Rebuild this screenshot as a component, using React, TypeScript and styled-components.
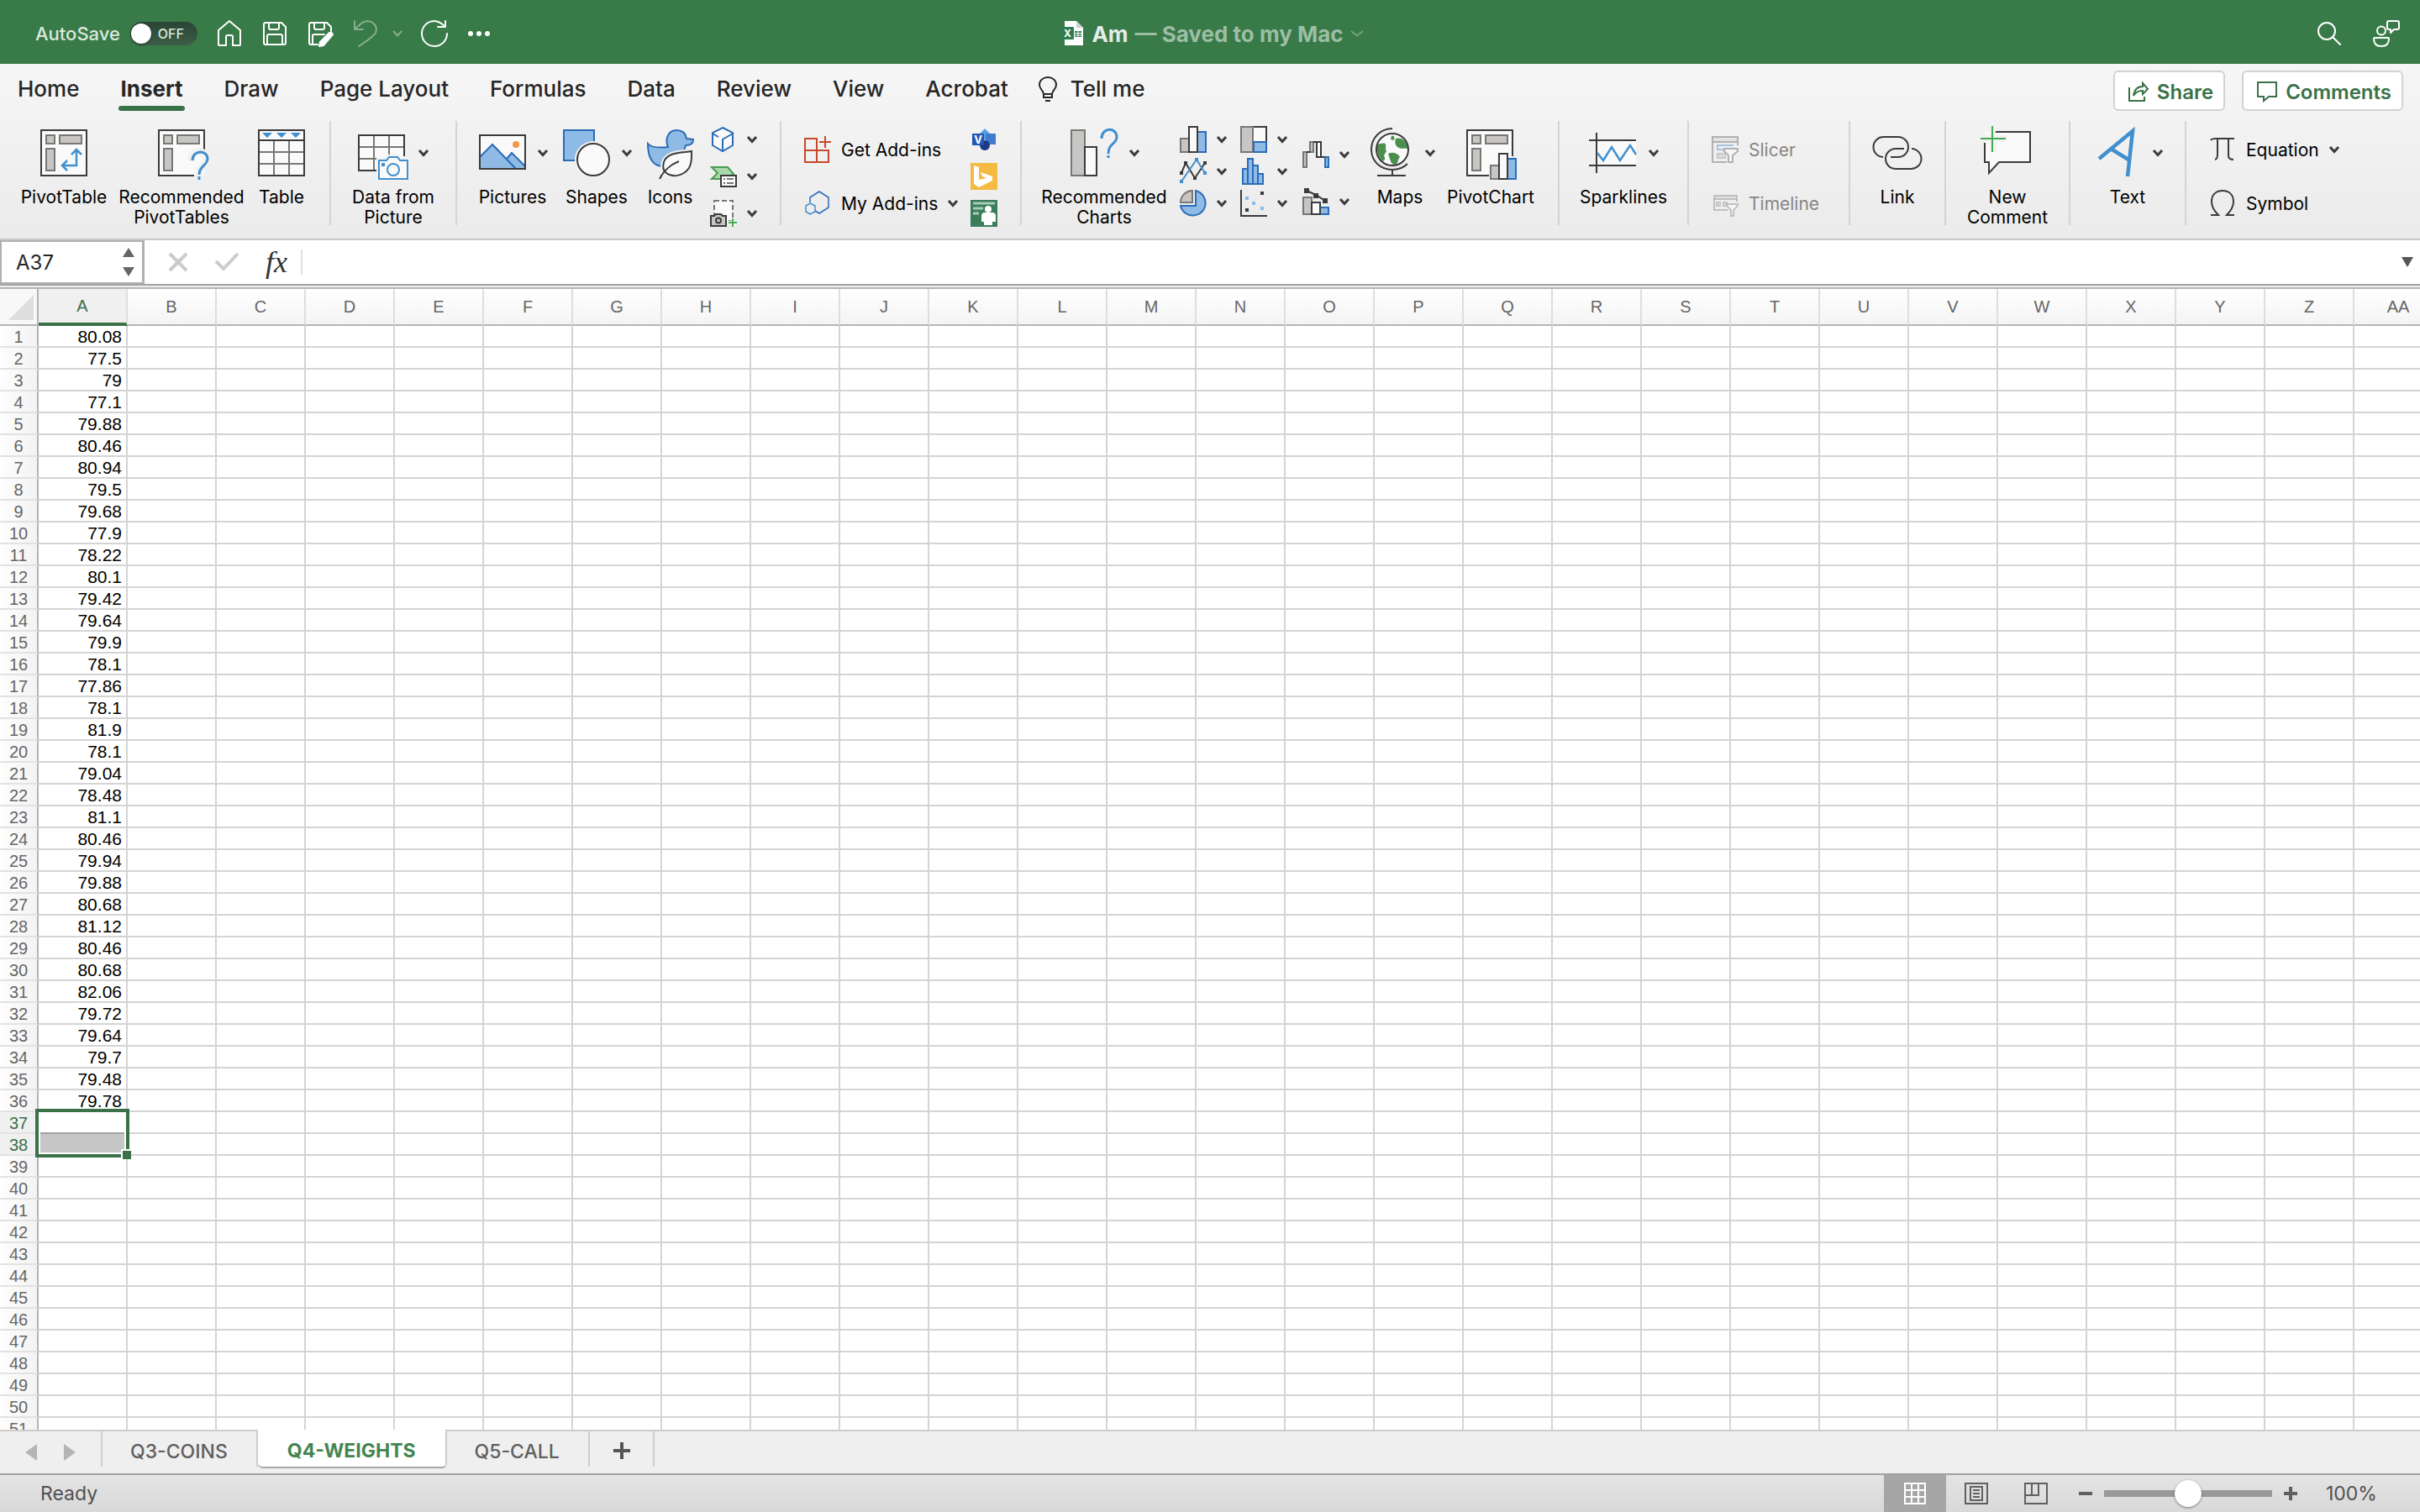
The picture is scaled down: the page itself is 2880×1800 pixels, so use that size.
import React from "react";
import styled, { createGlobalStyle, css } from "styled-components";

const GREEN = "#387a48";
const INK = "#3b3b3b";
const PAPER = "#fafafa";
const GREY = "#777774";
const GREY_FILL = "#c8c6c4";
const BLUE = "#2b6cb8";
const SKY = "#418fce";
const BLUE_FILL = "#8fbae6";

const GlobalStyle = createGlobalStyle`
  * { box-sizing: border-box; }
  body { margin: 0; }
  body, button, input {
    font-family: Inter, "Liberation Sans", sans-serif;
    color: #000;
  }
  button {
    margin: 0;
    padding: 0;
    border: 0;
    background: none;
    white-space: nowrap;
  }
  input { margin: 0; }
  svg { display: block; flex: none; overflow: visible; }
`;

const Window = styled.div`
  display: flex;
  flex-direction: column;
  height: 100vh;
  overflow: hidden;
  background: #fff;
`;

/* ---------- title bar ---------- */

const TitleBar = styled.header`
  flex: none;
  display: grid;
  grid-template-columns: 1fr auto 1fr;
  align-items: center;
  height: 76px;
  padding: 4px 24px 0 30px;
  background: ${GREEN};
  color: #fff;
`;

const QuickAccess = styled.div`
  display: flex;
  align-items: center;
  gap: 22px;
  padding-left: 12px;
`;

const AutoSave = styled.label`
  display: flex;
  align-items: center;
  gap: 12px;
  color: #dbe8de;
  font-size: 22px;
  font-weight: 500;
`;

const Switch = styled.span`
  position: relative;
  display: flex;
  align-items: center;
  justify-content: flex-end;
  width: 80px;
  height: 28px;
  padding-right: 16px;
  border-radius: 14px;
  background: linear-gradient(#2a4433, #3d5e48);
  color: #dbe8de;
  font-size: 16px;
  font-weight: 500;
`;

const SwitchInput = styled.input`
  position: absolute;
  left: 1px;
  top: 2px;
  width: 24px;
  height: 24px;
  appearance: none;
  border-radius: 50%;
  background: #fff;
  box-shadow: 0 1px 3px rgba(0, 0, 0, 0.5);
`;

const TitleButton = styled.button<{ $dim?: boolean }>`
  display: flex;
  align-items: center;
  gap: 16px;
  color: #fff;
  opacity: ${(p) => (p.$dim ? 0.4 : 1)};
`;

const DocTitle = styled.h1`
  display: flex;
  align-items: center;
  gap: 8px;
  margin: 0;
  font-size: 26px;
  font-weight: 700;
  color: #e3ece5;
`;

const SavedState = styled.span`
  color: #9cbea4;
`;

const TitleRight = styled.div`
  display: flex;
  justify-content: flex-end;
  gap: 36px;
`;

/* ---------- ribbon ---------- */

const RibbonArea = styled.section`
  flex: none;
  background: linear-gradient(#f6f6f6, #ebebeb);
  border-bottom: 2px solid #c9c9c9;
`;

const TabRow = styled.nav`
  display: flex;
  align-items: center;
  gap: 36px;
  height: 64px;
  padding: 0 20px 0 21px;
`;

const TabList = styled.div`
  display: flex;
  gap: 49px;
`;

const RibbonTab = styled.button<{ $active?: boolean }>`
  position: relative;
  display: flex;
  align-items: center;
  gap: 16px;
  height: 60px;
  padding-bottom: 5px;
  color: #262626;
  font-size: 26px;
  font-weight: ${(p) => (p.$active ? 700 : 500)};
  ${(p) =>
    p.$active &&
    css`
      &::after {
        content: "";
        position: absolute;
        left: -2px;
        right: -2px;
        bottom: 6px;
        height: 6px;
        border-radius: 3px;
        background: #3a7148;
      }
    `}
`;

const Actions = styled.div`
  display: flex;
  gap: 20px;
  margin-left: auto;
`;

const ActionButton = styled.button`
  display: flex;
  align-items: center;
  gap: 10px;
  height: 48px;
  padding: 2px 12px 0 16px;
  border: 2px solid #d2d2d2;
  border-radius: 6px;
  background: #fff;
  color: #3a7148;
  font-size: 24px;
  font-weight: 600;
`;

const Ribbon = styled.div`
  display: flex;
  height: 144px;
  padding: 4px 0 16px;
`;

const Group = styled.div<{ $left: number; $right: number; $last?: boolean }>`
  display: flex;
  flex: none;
  align-items: flex-start;
  height: 124px;
  padding: 6px ${(p) => p.$right}px 0 ${(p) => p.$left}px;
  border-right: ${(p) => (p.$last ? 0 : 2)}px solid #d4d4d4;
`;

const Tool = styled.button<{ $w: number }>`
  display: flex;
  flex-direction: column;
  align-items: center;
  gap: 9px;
  width: ${(p) => p.$w}px;
`;

const ToolFace = styled.span`
  display: flex;
  align-items: center;
  gap: 12px;
`;

const ToolLabel = styled.span`
  font-size: 21px;
  line-height: 24px;
  text-align: center;
  white-space: pre;
`;

const Stack = styled.div<{ $gap: number; $top?: number; $indent?: number }>`
  display: flex;
  flex-direction: column;
  gap: ${(p) => p.$gap}px;
  padding-top: ${(p) => p.$top ?? 0}px;
  margin-left: ${(p) => p.$indent ?? 0}px;
`;

const MiniTool = styled.button`
  display: flex;
  align-items: center;
  gap: 12px;
  height: 32px;
`;

const LineTools = styled.div<{ $w?: number }>`
  display: flex;
  flex-direction: column;
  gap: 16px;
  width: ${(p) => (p.$w ? `${p.$w}px` : "auto")};
  padding-top: 4px;
`;

const LineTool = styled.button`
  display: flex;
  align-items: center;
  gap: 12px;
  height: 48px;
  font-size: 21px;
  &:disabled { color: #858585; }
`;

/* ---------- formula bar ---------- */

const FormulaBar = styled.div`
  flex: none;
  display: flex;
  align-items: center;
  height: 52px;
  background: #fff;
`;

const NameBox = styled.div`
  display: flex;
  align-items: center;
  justify-content: space-between;
  align-self: stretch;
  width: 172px;
  padding: 0 9px 0 17px;
  border: 2px solid #b0b0b0;
  border-right-width: 3px;
`;

const NameInput = styled.input`
  width: 100px;
  padding: 0;
  border: 0;
  outline: 0;
  background: none;
  color: #262626;
  font-size: 24px;
`;

const FormulaActions = styled.div`
  display: flex;
  align-items: center;
  gap: 32px;
  padding: 0 16px 0 28px;
`;

const FxButton = styled.button`
  color: #333;
  font: italic 400 36px/40px "Liberation Serif", serif;
`;

const FormulaInput = styled.input`
  flex: 1;
  height: 30px;
  padding: 0 14px;
  border: 0;
  border-left: 2px solid #e0e0e0;
  outline: 0;
  font-size: 24px;
`;

const ExpandButton = styled.button`
  padding: 0 8px;
`;

const Divider = styled.div`
  flex: none;
  height: 6px;
  border-top: 2px solid #a3a3a3;
  border-bottom: 2px solid #b4b4b4;
  background: #ededed;
`;

/* ---------- grid ---------- */

const SheetArea = styled.main`
  flex: 1;
  min-height: 0;
  overflow: hidden;
  border-bottom: 2px solid #cdcdcd;
`;

const Sheet = styled.table`
  border-collapse: separate;
  border-spacing: 0;
  font-family: "Liberation Sans", Arial, sans-serif;
  font-size: 20px;
  line-height: 22px;
`;

const Corner = styled.td`
  min-width: 46px;
  width: 46px;
  height: 44px;
  padding: 6px 4px 4px 10px;
  border-right: 2px solid #b4b4b4;
  border-bottom: 2px solid #b4b4b4;
  background: #f8f8f8;
`;

const ColHead = styled.th<{ $on?: boolean }>`
  min-width: 106px;
  height: 44px;
  padding: 0;
  border-right: 2px solid #dedede;
  border-bottom: ${(p) => (p.$on ? "4px solid #3a7148" : "2px solid #b4b4b4")};
  background: ${(p) => (p.$on ? "#f0f0f0" : "linear-gradient(#ffffff, #f4f4f4)")};
  color: ${(p) => (p.$on ? "#3a7148" : "#666")};
  font-weight: 400;
`;

const RowHead = styled.th<{ $on?: boolean }>`
  height: 26px;
  padding: 2px 0 0;
  border-right: 2px solid #b4b4b4;
  border-bottom: 2px solid #e2e2e2;
  background: ${(p) => (p.$on ? "#f0f0f0" : "linear-gradient(90deg, #fefefe, #f3f3f3)")};
  color: ${(p) => (p.$on ? "#3a7148" : "#666")};
  font-weight: 400;
`;

const Cell = styled.td`
  position: relative;
  height: 26px;
  padding: 2px 5px 0;
  border-right: 2px solid #d4d4d4;
  border-bottom: 2px solid #d4d4d4;
  font-size: 21px;
  text-align: right;
`;

const Selection = styled.div`
  position: absolute;
  z-index: 1;
  left: -4px;
  top: -4px;
  width: 112px;
  height: 58px;
  border: 4px solid #3a7148;
  background: #fff;
`;

const SelectionFill = styled.div`
  position: absolute;
  inset: 24px 2px 2px;
  border-top: 2px solid #a2a2a2;
  background: #c6c6c6;
`;

const FillHandle = styled.div`
  position: absolute;
  right: -6px;
  bottom: -6px;
  width: 12px;
  height: 12px;
  border-left: 2px solid #fff;
  border-top: 2px solid #fff;
  background: #3a7148;
`;

/* ---------- sheet tabs and status bar ---------- */

const SheetTabs = styled.nav`
  flex: none;
  display: flex;
  align-items: flex-start;
  height: 50px;
  background: #efefef;
`;

const SheetNav = styled.div`
  display: flex;
  align-items: center;
  gap: 32px;
  width: 122px;
  height: 42px;
  padding: 8px 0 0 30px;
  border-right: 2px solid #cdcdcd;
`;

const SheetTab = styled.button<{ $active?: boolean }>`
  height: 42px;
  padding: 5px 34px 0 33px;
  border-right: 2px solid #cdcdcd;
  color: #5f5f5f;
  font-size: 23px;
  font-weight: 500;
  ${(p) =>
    p.$active &&
    css`
      height: 46px;
      margin-top: -2px;
      padding: 5px 35px 0;
      border-bottom: 2px solid #a8a8a8;
      border-radius: 0 0 6px 6px;
      background: #fff;
      color: #44854f;
      font-weight: 700;
    `}
`;

const AddSheet = styled.button`
  display: flex;
  align-items: center;
  height: 42px;
  padding: 4px 27px 0 28px;
  border-right: 2px solid #cdcdcd;
`;

const StatusBar = styled.footer`
  flex: none;
  display: flex;
  align-items: center;
  height: 46px;
  padding: 0 50px 0 48px;
  border-top: 2px solid #a0a0a0;
  background: linear-gradient(#e4e4e4, #d8d8d8);
  color: #505050;
  font-size: 23px;
`;

const ViewButtons = styled.div`
  display: flex;
  align-self: stretch;
  margin-left: auto;
`;

const ViewButton = styled.button<{ $active?: boolean }>`
  display: flex;
  align-items: center;
  justify-content: center;
  width: ${(p) => (p.$active ? 74 : 71)}px;
  background: ${(p) => (p.$active ? "#a6a6a6" : "none")};
`;

const Zoom = styled.div`
  display: flex;
  align-items: center;
  gap: 14px;
  padding-left: 16px;
`;

const ZoomSlider = styled.input`
  width: 200px;
  height: 32px;
  appearance: none;
  background: linear-gradient(#999, #999) no-repeat center / 100% 8px;
  border-radius: 4px;
  &::-webkit-slider-thumb {
    appearance: none;
    width: 32px;
    height: 32px;
    border-radius: 50%;
    background: #fff;
    box-shadow: 0 1px 3px rgba(0, 0, 0, 0.45);
  }
`;

const ZoomValue = styled.output`
  width: 62px;
  margin-left: 20px;
`;

/* ---------- small drawings ---------- */

const Chevron = ({ color = INK, w = 12, stroke = 3 }: { color?: string; w?: number; stroke?: number }) => (
  <svg width={w} height="8" viewBox={`0 0 ${w} 8`} fill="none" stroke={color} strokeWidth={stroke}>
    <path d={`M1 1L${w / 2} 6.5L${w - 1} 1`} />
  </svg>
);

const Triangle = ({ d, w, h, color }: { d: string; w: number; h: number; color: string }) => (
  <svg width={w} height={h} fill={color}>
    <path d={d} />
  </svg>
);

const Big = ({ children }: { children: React.ReactNode }) => (
  <svg width="60" height="64" viewBox="0 0 60 64" fill="none" strokeWidth="2">
    {children}
  </svg>
);

const Small = ({ children }: { children: React.ReactNode }) => (
  <svg width="32" height="32" viewBox="0 0 32 32" fill="none" strokeWidth="2">
    {children}
  </svg>
);

const Line32 = ({ children }: { children: React.ReactNode }) => (
  <svg width="32" height="32" viewBox="0 0 32 32" fill="none" stroke="#fff" strokeWidth="2" strokeLinejoin="round" strokeLinecap="round">
    {children}
  </svg>
);

const PivotBase = () => (
  <g fill={GREY_FILL} stroke={GREY}>
    <rect x="9" y="11" width="10" height="10" />
    <rect x="25" y="11" width="26" height="10" />
    <rect x="9" y="27" width="10" height="26" />
  </g>
);

const icons = {
  pivot: (
    <Big>
      <rect x="3" y="5" width="54" height="54" fill={PAPER} stroke={INK} />
      <PivotBase />
      <path d="M45 28V47H28M39 34L45 28L51 34M34 41L28 47L34 53" stroke={SKY} strokeWidth="2.5" />
    </Big>
  ),
  recPivot: (
    <Big>
      <path d="M3 5H57V59H3Z" fill={PAPER} />
      <path d="M57 28V5H3V59H45" stroke={INK} />
      <PivotBase />
      <path d="M42 42V38C42 28 60 28 60 39C60 48 51 47 51 58" stroke="#f2f2f2" strokeWidth="9" />
      <path d="M43 41C43 28 61 28 61 39C61 47 51 47 51 58M51 60V64" stroke={SKY} strokeWidth="3" />
    </Big>
  ),
  table: (
    <Big>
      <rect x="3" y="5" width="54" height="54" fill={PAPER} />
      <path d="M21 17V59M39 17V59M3 31H57M3 45H57" stroke={GREY} />
      <path d="M3 5H57V59H3ZM3 17H57" stroke={INK} />
      <path d="M7 8H19L13 14ZM24 8H36L30 14ZM41 8H53L47 14Z" fill={SKY} />
    </Big>
  ),
  dataPicture: (
    <Big>
      <rect x="1" y="11" width="54" height="42" fill={PAPER} />
      <path d="M19 11V53M37 11V34M1 25H55M1 39H24" stroke={GREY} />
      <path d="M55 36V11H1V53H22" stroke={INK} />
      <path d="M25 41H34L37 37H47L50 41H59V63H25Z" fill={PAPER} stroke="#f2f2f2" strokeWidth="6" />
      <path d="M25 41H34L37 37H47L50 41H59V63H25Z" fill={PAPER} stroke={SKY} />
      <circle cx="42" cy="52" r="7" stroke={SKY} />
      <rect x="28" y="44" width="4" height="4" fill={SKY} />
    </Big>
  ),
  pictures: (
    <Big>
      <rect x="3" y="11" width="54" height="40" fill={PAPER} />
      <path d="M3 37L18 22L46 51H3Z" fill={BLUE_FILL} />
      <path d="M35 39L41 32L57 48V51H46Z" fill={BLUE_FILL} />
      <path d="M3 37L18 22L46 51M35 39L41 32L57 48" stroke={BLUE} />
      <circle cx="46" cy="22" r="4" fill="#ee9a48" />
      <rect x="3" y="11" width="54" height="40" stroke={INK} />
    </Big>
  ),
  shapes: (
    <Big>
      <rect x="3" y="5" width="36" height="36" fill={BLUE_FILL} stroke={BLUE} />
      <circle cx="38" cy="40" r="22" fill="#f2f2f2" />
      <circle cx="38" cy="40" r="19" fill={PAPER} stroke={INK} />
    </Big>
  ),
  icons: (
    <Big>
      <path d="M3 21C7 26 18 26 27 25C23 16 27 5 37 5C44 5 48 9 49 15L57 16C57 21 53 23 48 23L46 30L28 36L20 48C8 47 3 36 3 21Z" fill={BLUE_FILL} stroke={BLUE} />
      <path d="M55 30C42 32 26 31 22 43C20 50 22 54 25 56C33 62 46 59 52 50C56 43 55 36 55 30Z" fill={PAPER} stroke="#f2f2f2" strokeWidth="6" />
      <path d="M55 30C42 32 26 31 22 43C20 50 22 54 25 56C33 62 46 59 52 50C56 43 55 36 55 30Z" fill={PAPER} stroke={INK} />
      <path d="M40 42C30 46 21 54 17 63" stroke={INK} />
    </Big>
  ),
  cube: (
    <Small>
      <path d="M15 2L27 8V23L15 30L3 23V8Z" fill={PAPER} stroke={BLUE} />
      <path d="M3 9L10 13M15 30V16L27 9" stroke={BLUE} />
    </Small>
  ),
  smartArt: (
    <Small>
      <path d="M2 5H21L28 13L20 19H2L9 12Z" fill="#a9d8ab" stroke="#4a9a50" />
      <rect x="13" y="15" width="18" height="13" fill={PAPER} stroke={INK} />
      <path d="M16 19H18M16 24H18M20 19H28M20 24H28" stroke={GREY} />
    </Small>
  ),
  screenshot: (
    <Small>
      <rect x="5" y="1" width="22" height="24" fill={PAPER} stroke={GREY} strokeDasharray="6 3" />
      <path d="M1 19H5L7 17H13L15 19H19V31H1Z" fill={GREY_FILL} stroke={INK} />
      <circle cx="10" cy="24.500" r="3" stroke={INK} />
      <path d="M27 21V32M22 27H32" stroke="#fafafa" strokeWidth="4" />
      <path d="M27 22V32M22 27H32" stroke="#45a852" />
    </Small>
  ),
  getAddins: (
    <Small>
      <path d="M1 3H15V31H1ZM1 17H29V31H15M25 0V14M18 7H32" stroke="#c8492a" />
    </Small>
  ),
  myAddins: (
    <Small>
      <path d="M7 15V9L18 2L29 9V21L18 28L13 25" stroke={BLUE} strokeWidth="1.5" />
      <path d="M7 16L13 19V26L7 29L2 26V19Z" stroke={SKY} strokeWidth="1.5" />
    </Small>
  ),
  visio: (
    <Small>
      <path d="M17 3L24 10L17 17L10 10Z" fill="#55a1e6" />
      <rect x="18" y="9" width="12" height="13" fill="#3f7ccc" />
      <circle cx="17" cy="23" r="6" fill="#1b3a82" />
      <rect x="2" y="9" width="14" height="14" fill="#2356b4" />
      <text x="9" y="21" fill="#fff" fontSize="13" fontWeight="700" textAnchor="middle">V</text>
    </Small>
  ),
  bing: (
    <Small>
      <rect width="32" height="32" fill="#f5ba42" />
      <path d="M4 3L10 5V20L19 18L14 16L12 11L26 16V21L10 29L4 25Z" fill="#fff" />
    </Small>
  ),
  people: (
    <Small>
      <rect width="32" height="32" fill="#3a7d59" />
      <path d="M3 4H29M3 10H15M3 16H10" stroke="#a9cbb8" strokeWidth="3" />
      <circle cx="21" cy="11" r="4" fill="#fff" />
      <path d="M13 26V19Q13 15 17 15H26Q30 15 30 19V26H26V30H16V26Z" fill="#fff" />
    </Small>
  ),
  recCharts: (
    <Big>
      <rect x="3" y="5" width="16" height="54" fill={GREY_FILL} stroke={GREY} />
      <rect x="19" y="25" width="14" height="34" fill={PAPER} stroke={INK} />
      <path d="M39 15C39 1 57 1 57 13C57 22 47 20 47 33M47 35V38" stroke={SKY} strokeWidth="3" />
    </Big>
  ),
  column: (
    <Small>
      <rect x="1" y="15" width="10" height="16" fill={GREY_FILL} stroke={GREY} />
      <rect x="21" y="7" width="10" height="24" fill={BLUE_FILL} stroke={BLUE} />
      <rect x="11" y="1" width="10" height="30" fill={PAPER} stroke={INK} />
    </Small>
  ),
  line: (
    <Small>
      <path d="M2 18L7 6L18 24L30 6" stroke={INK} />
      <path d="M2 28L20 2L30 18" stroke={SKY} />
      <path d="M0 16H4V20H0ZM5 4H9V8H5ZM16 22H20V26H16ZM28 4H32V8H28Z" fill={INK} />
      <path d="M0 26H4V30H0ZM18 0H22V4H18ZM28 16H32V20H28Z" fill={SKY} />
    </Small>
  ),
  pie: (
    <Small>
      <path d="M19 1A15 15 0 1 1 1 19H19Z" fill={BLUE_FILL} stroke={BLUE} />
      <path d="M15 1A14 14 0 0 0 1 15H15Z" fill={GREY_FILL} stroke={GREY} />
    </Small>
  ),
  tree: (
    <Small>
      <rect x="15" y="1" width="16" height="18" fill={PAPER} stroke={INK} />
      <rect x="1" y="1" width="14" height="30" fill={GREY_FILL} stroke={GREY} />
      <rect x="16" y="19" width="15" height="12" fill={BLUE_FILL} stroke={BLUE} />
    </Small>
  ),
  histogram: (
    <Small>
      <path d="M3 13H9V1H15V9H21V19H27V31H3Z" fill={BLUE_FILL} stroke={BLUE} />
      <path d="M9 13V31M15 9V31M21 19V31" stroke={BLUE} />
    </Small>
  ),
  scatter: (
    <Small>
      <path d="M1 0V31H32" stroke={INK} />
      <path d="M24 2H28V6H24ZM6 22H10V26H6Z" fill={INK} />
      <path d="M6 8H10V12H6ZM14 14H18V18H14ZM24 20H28V24H24Z" fill={BLUE_FILL} />
    </Small>
  ),
  waterfall: (
    <Small>
      <rect x="1" y="13" width="4" height="18" fill={GREY_FILL} stroke={GREY} />
      <rect x="9" y="1" width="4" height="12" fill={GREY_FILL} stroke={GREY} />
      <rect x="17" y="1" width="5" height="18" fill={PAPER} stroke={INK} />
      <rect x="27" y="19" width="4" height="12" fill={BLUE_FILL} stroke={BLUE} />
      <path d="M5 13H9M13 1H17M22 19H27" stroke={INK} />
    </Small>
  ),
  combo: (
    <Small>
      <rect x="1" y="11" width="10" height="20" fill={GREY_FILL} stroke={GREY} />
      <rect x="21" y="23" width="10" height="8" fill={BLUE_FILL} stroke={BLUE} />
      <rect x="11" y="17" width="10" height="14" fill={PAPER} stroke={INK} />
      <path d="M5 3L16 8L27 15" stroke={INK} />
      <path d="M2 0H8V6H2ZM13 6H19V12H13ZM24 12H30V18H24Z" fill={INK} />
    </Small>
  ),
  globe: (
    <Big>
      <circle cx="33" cy="28" r="19" fill={PAPER} />
      <path d="M15 22C19 21 24 19 25 22C26 26 24 27 26 30L23 35C25 39 24 41 22 42C17 38 14 32 15 22ZM32 12C35 10 36 14 35 17L31 16ZM37 15C44 13 51 18 51 27C46 25 43 29 38 24C35 20 37 17 37 15ZM28 33C34 30 40 33 42 37C39 40 40 46 36 46C32 46 31 42 30 39Z" fill="#4a8f4c" />
      <circle cx="33" cy="28" r="19" stroke={INK} />
      <path d="M33 3C19 3 8 14 8 28C8 42 19 52 33 52C41 52 47 49 51 45M33 52V59M15 59H49" stroke={INK} />
    </Big>
  ),
  pivotChart: (
    <Big>
      <path d="M2 5H56V59H2Z" fill={PAPER} />
      <path d="M56 36V5H2V59H28" stroke={INK} />
      <g transform="translate(-1 0)"><PivotBase /></g>
      <path d="M28 46H38V32H50V38H62V66H28Z" fill="#f2f2f2" />
      <rect x="30" y="47" width="10" height="16" fill={GREY_FILL} stroke={GREY} />
      <rect x="50" y="39" width="10" height="24" fill={BLUE_FILL} stroke={BLUE} />
      <rect x="40" y="33" width="10" height="30" fill={PAPER} stroke={INK} />
    </Big>
  ),
  sparkline: (
    <Big>
      <rect x="10" y="17" width="47" height="30" fill={PAPER} />
      <path d="M1 17H57M1 47H57M10 8V56" stroke={INK} />
      <path d="M11 32L18 41L28 25L38 41L50 23L57 34" stroke={SKY} strokeWidth="2.500" />
    </Big>
  ),
  slicer: (
    <Small>
      <path d="M1 1H31V31H1Z" fill="#efefef" />
      <rect x="1" y="1" width="30" height="6" fill="#e2e2e2" />
      <path d="M31 11V1H1V31H18M1 7H31" stroke="#b3b1b0" />
      <path d="M26 11H7V16H14" stroke="#a9c1dd" />
      <rect x="7" y="21" width="9" height="5" fill="#dedede" stroke="#c8c8c8" />
      <path d="M15 15H31V18L25 23V31H20V23L15 18Z" fill="#f6f6f6" stroke="#b3b1b0" />
    </Small>
  ),
  timeline: (
    <Small>
      <rect x="3" y="7" width="27" height="4" fill="#e0e0e0" />
      <path d="M30 14V7H3V24H19M3 11H30" stroke="#b3b1b0" strokeWidth="1.500" />
      <path d="M6 15H10V19H6ZM14 15H18V19H14Z" fill="#e0e0e0" stroke="#c4c4c4" />
      <path d="M18 17H31V19L26 24V31H23V24L18 19Z" fill="#f6f6f6" stroke="#b3b1b0" strokeWidth="1.500" />
    </Small>
  ),
  link: (
    <Big>
      <path d="M13 37A12 12 0 0 1 14 13H31A12 12 0 0 1 31 37H22" stroke={INK} />
      <path d="M38 27H28A12 12 0 0 0 28 51H46A12 12 0 0 0 47 27" stroke={INK} />
    </Big>
  ),
  comment: (
    <Big>
      <path d="M3 7H57V43H20L8 56V43H3Z" fill={PAPER} />
      <path d="M0 15H29M13 0V31" stroke="#f2f2f2" strokeWidth="8" />
      <path d="M16 7H57V43H20L8 56V43H3V20" stroke={INK} />
      <path d="M-2 15H28M12 0V31" stroke="#45a852" />
    </Big>
  ),
  text: (
    <Big>
      <path d="M8 39L48 6L42 60M22 27L43 40" stroke={SKY} strokeWidth="4.500" />
    </Big>
  ),
  pi: (
    <Small>
      <path d="M2 5Q3 3 8 3H30M10 3V22Q10 27 7 28M23 3V23Q23 28 29 28" stroke={INK} />
    </Small>
  ),
  omega: (
    <Small>
      <path d="M2 30H11Q3 22 3 14C3 5 9 1 16 1C23 1 29 5 29 14Q29 22 21 30H30" stroke={INK} />
    </Small>
  ),
};

type ToolProps = { icon: React.ReactNode; label: string; w: number; menu?: boolean };

const RibbonTool = ({ icon, label, w, menu }: ToolProps) => (
  <Tool $w={w}>
    <ToolFace>
      {icon}
      {menu && <Chevron />}
    </ToolFace>
    <ToolLabel>{label}</ToolLabel>
  </Tool>
);

const Mini = ({ icon, name, menu = true }: { icon: React.ReactNode; name: string; menu?: boolean }) => (
  <MiniTool aria-label={name}>
    {icon}
    {menu && <Chevron />}
  </MiniTool>
);

/* ---------- data ---------- */

const COLUMNS = Array.from({ length: 27 }, (_, i) => (i < 26 ? String.fromCharCode(65 + i) : "AA"));
const ROWS = Array.from({ length: 51 }, (_, i) => i + 1);
const WEIGHTS = [
  80.08, 77.5, 79, 77.1, 79.88, 80.46, 80.94, 79.5, 79.68, 77.9, 78.22, 80.1,
  79.42, 79.64, 79.9, 78.1, 77.86, 78.1, 81.9, 78.1, 79.04, 78.48, 81.1, 80.46,
  79.94, 79.88, 80.68, 81.12, 80.46, 80.68, 82.06, 79.72, 79.64, 79.7, 79.48, 79.78,
];
const TABS = ["Home", "Insert", "Draw", "Page Layout", "Formulas", "Data", "Review", "View", "Acrobat"];

export default function App() {
  return (
    <Window>
      <GlobalStyle />
      <TitleBar>
        <QuickAccess>
          <AutoSave>
            AutoSave
            <Switch>
              <SwitchInput type="checkbox" role="switch" />
              OFF
            </Switch>
          </AutoSave>
          <TitleButton aria-label="Home">
            <Line32><path d="M3 12L16 1L29 12V29Q29 30 28 30H20V20Q20 18 18 18H14Q12 18 12 20V30H4Q3 30 3 29Z" /></Line32>
          </TitleButton>
          <TitleButton aria-label="Save">
            <Line32><path d="M3 5Q3 3 5 3H24L29 8V27Q29 29 27 29H5Q3 29 3 27ZM9 3V9Q9 11 11 11H19Q21 11 21 9V3M7 29V19Q7 17 9 17H23Q25 17 25 19V29" /></Line32>
          </TitleButton>
          <TitleButton aria-label="Save As">
            <Line32>
              <path d="M29 13V8L24 3H5Q3 3 3 5V27Q3 29 5 29H13M9 3V9Q9 11 11 11H19Q21 11 21 9V3M7 29V19Q7 17 9 17H21" />
              <path d="M27 15Q30 14 31 17L20 30L15 31L16 26Z" fill="#fff" />
            </Line32>
          </TitleButton>
          <TitleButton $dim aria-label="Undo">
            <Line32><path d="M3 1V11H13M3 11L12 3Q17 0 23 2Q31 7 28 15Q25 20 8 31" /></Line32>
            <Chevron color="#fff" stroke={2} />
          </TitleButton>
          <TitleButton aria-label="Redo">
            <Line32><path d="M29 1V8H20M29 8Q22 1 16 1A15 15 0 1 0 31 16" /></Line32>
          </TitleButton>
          <TitleButton aria-label="More commands">
            <svg width="28" height="8" fill="#fff"><circle cx="5" cy="4" r="3" /><circle cx="15" cy="4" r="3" /><circle cx="25" cy="4" r="3" /></svg>
          </TitleButton>
        </QuickAccess>
        <DocTitle>
          <svg width="28" height="30" viewBox="0 0 28 30">
            <path d="M4 0H18L26 8V29H4Z" fill="#fff" />
            <path d="M18 0V8H26Z" fill="#c9d4cc" />
            <path d="M16 12H24V19H16Z" fill="#2f7d4f" />
            <path d="M16 14.500H24M16 17H24M20 11V20" stroke="#fff" />
            <rect y="7" width="15" height="15" rx="1" fill="#2f7d4f" />
            <text x="7.500" y="19" fill="#fff" fontSize="12" fontWeight="700" textAnchor="middle">X</text>
          </svg>
          <span>Am</span>
          <SavedState>— Saved to my Mac</SavedState>
          <Chevron color="#74a27f" w={16} stroke={2} />
        </DocTitle>
        <TitleRight>
          <TitleButton aria-label="Search">
            <Line32><circle cx="13" cy="13" r="10" /><path d="M20 20L29 29" /></Line32>
          </TitleButton>
          <TitleButton aria-label="Presence">
            <Line32>
              <circle cx="10" cy="12.500" r="5" />
              <path d="M2 21H18Q19 21 19 22Q19 31 10 31Q1 31 1 22Q1 21 2 21ZM19 1H29Q31 1 31 3V9Q31 11 29 11H25L21 15V11H19Q17 11 17 9V3Q17 1 19 1Z" />
            </Line32>
          </TitleButton>
        </TitleRight>
      </TitleBar>

      <RibbonArea>
        <TabRow>
          <TabList>
            {TABS.map((t) => (
              <RibbonTab key={t} $active={t === "Insert"}>{t}</RibbonTab>
            ))}
          </TabList>
          <RibbonTab>
            <svg width="22" height="30" viewBox="0 0 22 30" fill="none" stroke="#262626" strokeWidth="2">
              <path d="M6 21C6 17 1 15 1 10C1 5 5 1 11 1S21 5 21 10C21 15 16 17 16 21V25H6ZM6 21H16M8 29H14" />
            </svg>
            Tell me
          </RibbonTab>
          <Actions>
            <ActionButton>
              <svg width="24" height="24" viewBox="0 0 24 24" fill="none" stroke="#3a7148" strokeWidth="2">
                <path d="M1 7V23H19V18M6 17C7 10 10 6 17 6V2L23 9L17 15V11C12 11 9 12 6 17Z" />
              </svg>
              Share
            </ActionButton>
            <ActionButton>
              <svg width="24" height="24" viewBox="0 0 24 24" fill="none" stroke="#3a7148" strokeWidth="2">
                <path d="M1 1H23V18H14L8 23V18H1Z" />
              </svg>
              Comments
            </ActionButton>
          </Actions>
        </TabRow>

        <Ribbon>
          <Group $left={16} $right={18}>
            <RibbonTool icon={icons.pivot} label="PivotTable" w={120} />
            <RibbonTool icon={icons.recPivot} label={"Recommended\nPivotTables"} w={160} />
            <RibbonTool icon={icons.table} label="Table" w={78} />
          </Group>
          <Group $left={14} $right={14}>
            <RibbonTool icon={icons.dataPicture} label={"Data from\nPicture"} w={120} menu />
          </Group>
          <Group $left={16} $right={27}>
            <RibbonTool icon={icons.pictures} label="Pictures" w={100} menu />
            <RibbonTool icon={icons.shapes} label="Shapes" w={100} menu />
            <RibbonTool icon={icons.icons} label="Icons" w={75} />
            <Stack $gap={12} $indent={10}>
              <Mini icon={icons.cube} name="3D Models" />
              <Mini icon={icons.smartArt} name="SmartArt" />
              <Mini icon={icons.screenshot} name="Screenshot" />
            </Stack>
          </Group>
          <Group $left={27} $right={27}>
            <LineTools $w={198}>
              <LineTool>{icons.getAddins}Get Add-ins</LineTool>
              <LineTool>{icons.myAddins}My Add-ins<Chevron /></LineTool>
            </LineTools>
            <Stack $gap={12}>
              <Mini icon={icons.visio} name="Visio Data Visualizer" menu={false} />
              <Mini icon={icons.bing} name="Bing Maps" menu={false} />
              <Mini icon={icons.people} name="People Graph" menu={false} />
            </Stack>
          </Group>
          <Group $left={16} $right={18}>
            <RibbonTool icon={icons.recCharts} label={"Recommended\nCharts"} w={164} menu />
            <Stack $gap={6} $indent={8}>
              <Mini icon={icons.column} name="Column chart" />
              <Mini icon={icons.line} name="Line chart" />
              <Mini icon={icons.pie} name="Pie chart" />
            </Stack>
            <Stack $gap={6} $indent={16}>
              <Mini icon={icons.tree} name="Hierarchy chart" />
              <Mini icon={icons.histogram} name="Statistical chart" />
              <Mini icon={icons.scatter} name="Scatter chart" />
            </Stack>
            <Stack $gap={24} $top={18} $indent={18}>
              <Mini icon={icons.waterfall} name="Waterfall chart" />
              <Mini icon={icons.combo} name="Combo chart" />
            </Stack>
            <Stack $gap={0} $indent={14}>
              <RibbonTool icon={icons.globe} label="Maps" w={92} menu />
            </Stack>
            <RibbonTool icon={icons.pivotChart} label="PivotChart" w={124} />
          </Group>
          <Group $left={16} $right={16}>
            <RibbonTool icon={icons.sparkline} label="Sparklines" w={120} menu />
          </Group>
          <Group $left={27} $right={27}>
            <LineTools $w={136}>
              <LineTool disabled>{icons.slicer}Slicer</LineTool>
              <LineTool disabled>{icons.timeline}Timeline</LineTool>
            </LineTools>
          </Group>
          <Group $left={16} $right={16}>
            <RibbonTool icon={icons.link} label="Link" w={80} />
          </Group>
          <Group $left={16} $right={16}>
            <RibbonTool icon={icons.comment} label={"New\nComment"} w={114} />
          </Group>
          <Group $left={16} $right={16}>
            <RibbonTool icon={icons.text} label="Text" w={104} menu />
          </Group>
          <Group $left={27} $right={27} $last>
            <LineTools>
              <LineTool>{icons.pi}Equation<Chevron /></LineTool>
              <LineTool>{icons.omega}Symbol</LineTool>
            </LineTools>
          </Group>
        </Ribbon>
      </RibbonArea>

      <FormulaBar>
        <NameBox>
          <NameInput aria-label="Name box" defaultValue="A37" />
          <svg width="14" height="34" fill="#666"><path d="M0 11L7 0L14 11ZM0 23L7 34L14 23Z" /></svg>
        </NameBox>
        <FormulaActions>
          <button aria-label="Cancel">
            <svg width="24" height="24" stroke="#cbcbcb" strokeWidth="4"><path d="M2 2L22 22M22 2L2 22" /></svg>
          </button>
          <button aria-label="Enter">
            <svg width="28" height="24" fill="none" stroke="#cbcbcb" strokeWidth="4"><path d="M1 11L10 20L27 2" /></svg>
          </button>
          <FxButton>fx</FxButton>
        </FormulaActions>
        <FormulaInput aria-label="Formula" defaultValue="" />
        <ExpandButton aria-label="Expand formula bar">
          <Triangle d="M0 0H14L7 12Z" w={14} h={12} color="#555" />
        </ExpandButton>
      </FormulaBar>
      <Divider />

      <SheetArea>
        <Sheet>
          <thead>
            <tr>
              <Corner><Triangle d="M30 0V30H0Z" w={30} h={30} color="#dedede" /></Corner>
              {COLUMNS.map((c) => (
                <ColHead key={c} $on={c === "A"} scope="col">{c}</ColHead>
              ))}
            </tr>
          </thead>
          <tbody>
            {ROWS.map((r) => (
              <tr key={r}>
                <RowHead $on={r === 37 || r === 38} scope="row">{r}</RowHead>
                {COLUMNS.map((c) => (
                  <Cell key={c}>
                    {c === "A" && WEIGHTS[r - 1]}
                    {c === "A" && r === 37 && (
                      <Selection>
                        <SelectionFill />
                        <FillHandle />
                      </Selection>
                    )}
                  </Cell>
                ))}
              </tr>
            ))}
          </tbody>
        </Sheet>
      </SheetArea>

      <SheetTabs>
        <SheetNav>
          <button aria-label="Previous sheet"><Triangle d="M14 0V20L0 10Z" w={14} h={20} color="#b5b5b5" /></button>
          <button aria-label="Next sheet"><Triangle d="M0 0V20L14 10Z" w={14} h={20} color="#b5b5b5" /></button>
        </SheetNav>
        <SheetTab>Q3-COINS</SheetTab>
        <SheetTab $active>Q4-WEIGHTS</SheetTab>
        <SheetTab>Q5-CALL</SheetTab>
        <AddSheet aria-label="Add sheet">
          <svg width="20" height="20" stroke="#555" strokeWidth="4"><path d="M10 0V20M0 10H20" /></svg>
        </AddSheet>
      </SheetTabs>

      <StatusBar>
        <span>Ready</span>
        <ViewButtons>
          <ViewButton $active aria-label="Normal view">
            <svg width="26" height="26" fill="none" stroke="#fff" strokeWidth="2"><path d="M1 1H25V25H1ZM9 1V25M17 1V25M1 9H25M1 17H25" /></svg>
          </ViewButton>
          <ViewButton aria-label="Page layout view">
            <svg width="28" height="26" fill="none" stroke="#606060" strokeWidth="2"><path d="M1 1H27V25H1ZM7 5H21V21H7ZM10 9H18M10 13H18M10 17H18" /></svg>
          </ViewButton>
          <ViewButton aria-label="Page break preview">
            <svg width="28" height="26" fill="none" stroke="#606060" strokeWidth="2"><path d="M1 1H27V25H1ZM1 15H17V1M9 1V15" /></svg>
          </ViewButton>
        </ViewButtons>
        <Zoom>
          <button aria-label="Zoom out"><svg width="16" height="16" stroke="#606060" strokeWidth="4"><path d="M0 8H16" /></svg></button>
          <ZoomSlider type="range" aria-label="Zoom" min={0} max={200} defaultValue={100} />
          <button aria-label="Zoom in"><svg width="16" height="16" stroke="#606060" strokeWidth="4"><path d="M0 8H16M8 0V16" /></svg></button>
          <ZoomValue>100%</ZoomValue>
        </Zoom>
      </StatusBar>
    </Window>
  );
}
